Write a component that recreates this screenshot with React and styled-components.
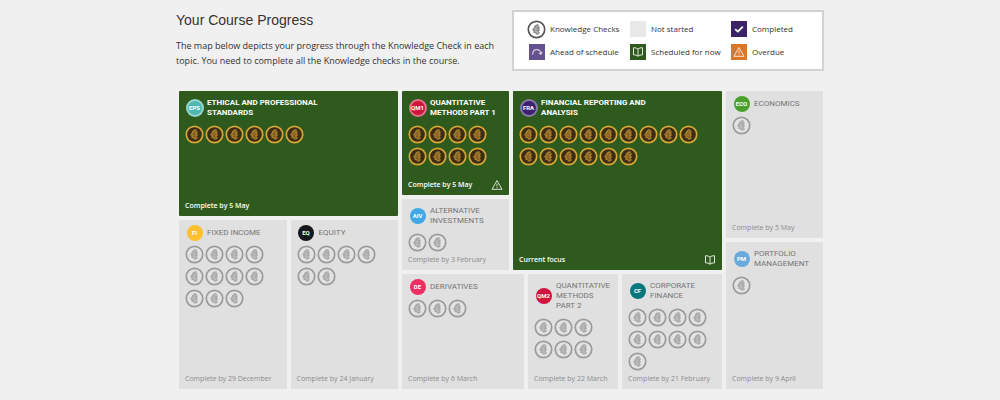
import React from "react";
import styled, { createGlobalStyle } from "styled-components";

const GlobalStyle = createGlobalStyle`
  body {
    margin: 0;
    background: #f0f0f0;
    color: #333;
    font-family: "Open Sans", "Noto Sans", sans-serif;
  }
`;

const Page = styled.main`
  box-sizing: border-box;
  max-width: 648px;
  margin: 0 auto;
  padding: 10px 0 11px;
`;

const Header = styled.header`
  display: flex;
  align-items: flex-start;
  margin-bottom: 20px;
`;

const Intro = styled.div`
  flex: 1;
  padding-right: 16px;

  h1 {
    margin: 0 0 8px;
    font-family: "Liberation Sans", Arial, sans-serif;
    font-size: 14px;
    font-weight: 400;
    line-height: 20px;
  }

  p {
    margin: 0;
    font-size: 9px;
    line-height: 15px;
  }
`;

const Legend = styled.ul`
  box-sizing: border-box;
  flex: 0 0 312px;
  display: grid;
  grid-template-columns: 101px 101px 1fr;
  grid-auto-rows: 22px;
  row-gap: 1px;
  margin: 0;
  padding: 6px 0 6px 13px;
  list-style: none;
  border: 2px solid #d2d2d2;
  background: #fff;
`;

const LegendItem = styled.li`
  display: flex;
  align-items: center;
  gap: 4px;
  font-size: 8px;
  line-height: 12px;
  white-space: nowrap;
`;

const Slot = styled.span`
  flex: none;
  display: flex;
  align-items: center;
  justify-content: center;
  width: 19px;
`;

const Swatch = styled.span`
  display: flex;
  align-items: center;
  justify-content: center;
  width: 16px;
  height: 16px;
  color: #fff;
  background: ${({ $color }) => $color};
`;

const Row = styled.div`
  display: grid;
  grid-template-columns: ${({ $cols }) => $cols};
  gap: 4px;
  min-width: 0;
`;

const Column = styled.div`
  display: grid;
  grid-template-rows: ${({ $rows }) => $rows};
  gap: 4px;
  min-width: 0;
`;

const Map = styled(Row)`
  min-height: 298px;
  margin: 0 1px 0 3px;
`;

const TileRoot = styled.section`
  box-sizing: border-box;
  display: flex;
  flex-direction: column;
  min-width: 0;
  padding: 3px 6px 5px;
  border-radius: 1px;
  color: ${({ $active }) => ($active ? "#fff" : "#757575")};
  background: ${({ $active }) => ($active ? "#2f5a1d" : "#e0e0e0")};
`;

const TileHead = styled.div`
  display: flex;
  align-items: center;
  gap: 3px;
  min-height: 19px;

  h2 {
    max-width: 120px;
    margin: 0;
    padding: 4px 0;
    font-family: Roboto, "Open Sans", sans-serif;
    font-size: 8px;
    font-weight: ${({ $active }) => ($active ? 700 : 400)};
    line-height: 10px;
    text-transform: uppercase;
  }
`;

const Badge = styled.span`
  box-sizing: border-box;
  display: flex;
  align-items: center;
  justify-content: center;
  width: ${({ $active }) => ($active ? 18 : 16)}px;
  height: ${({ $active }) => ($active ? 18 : 16)}px;
  border: ${({ $active }) => ($active ? "2px solid rgba(255, 255, 255, 0.4)" : "0")};
  border-radius: 50%;
  color: #fff;
  background: ${({ $color }) => $color};
  font-family: Roboto, "Open Sans", sans-serif;
  font-size: 6px;
  font-weight: 700;
  line-height: 8px;
`;

const Coins = styled.div`
  display: flex;
  flex-wrap: wrap;
  gap: 3px 1px;
  margin-top: 3px;
`;

const TileFoot = styled.div`
  display: flex;
  align-items: center;
  justify-content: space-between;
  height: 10px;
  margin-top: auto;
  font-size: 7px;
  font-weight: ${({ $active }) => ($active ? 600 : 400)};
  line-height: 10px;
  white-space: nowrap;
  color: ${({ $active }) => ($active ? "#fff" : "#8c8c8c")};
`;

const coinColors = {
  active: { ring: "#d6a733", fill: "#3b2c18", mark: "#a67c2a" },
  muted: { ring: "#9b9b9b", fill: "#e3e3e3", mark: "#a9a9a9" },
  legend: { ring: "#555", fill: "#fff", mark: "#8a8a8a" },
};

const Coin = ({ tone }) => {
  const { ring, fill, mark } = coinColors[tone];
  return (
    <svg width="19" height="19" viewBox="0 0 19 19" aria-hidden="true">
      <circle cx="9.5" cy="9.5" r="8.2" fill={fill} stroke={ring} strokeWidth="1.7" />
      <path
        d="M11.6 4.2 9 4.6 7.2 6.2 6.4 8.2 4.8 10l1.5.6.2 2.4 1.9.2 1 1.6 2.8-.8.6-1.6-1.2-1 1.4-1.4-1-1.4 1-1.6-1.2-1z"
        fill={mark}
      />
      <path
        d="M11.6 6.6c-1.6-.6-2.8.4-2.8 2.2M7.4 9.2h3.4M8 11h2.6M8.8 11c.2 1.4 1.4 2 2.6 1.4"
        fill="none"
        stroke={fill}
        strokeWidth="0.6"
        opacity="0.7"
      />
    </svg>
  );
};

const Icon = ({ width = 1, children }) => (
  <svg
    width="12"
    height="12"
    viewBox="0 0 12 12"
    fill="none"
    stroke="currentColor"
    strokeWidth={width}
    strokeLinejoin="round"
    aria-hidden="true"
  >
    {children}
  </svg>
);

const CheckIcon = () => (
  <Icon width={1.8}>
    <path d="M2.2 6.2 4.8 8.6 9.8 3.6" />
  </Icon>
);

const AheadIcon = () => (
  <Icon width={1.2}>
    <path d="M1.600 8.800c0-3.200 1.800-5.200 4.200-5.200 2.200 0 3.800 1.600 4.200 4.200M7.800 7.200l2.300 1 .9-2.200" opacity="0.7" />
  </Icon>
);

const BookIcon = () => (
  <Icon>
    <path
      d="M6 3.200C5 2 3.200 1.700 1.500 1.700v7.200c1.700 0 3.500.2 4.500 1.400 1-1.200 2.800-1.400 4.500-1.400V1.700C8.800 1.700 7 2 6 3.200zM6 3.200v7.100"
      opacity="0.85"
    />
  </Icon>
);

const WarningIcon = () => (
  <Icon>
    <path d="M6 1.500 11 10.300H1zM6 4.600v2.800M6 8.200v1" opacity="0.8" />
  </Icon>
);

const Tile = ({ code, color, title, checks, due, active, icon }) => (
  <TileRoot $active={active}>
    <TileHead $active={active}>
      <Slot>
        <Badge $color={color} $active={active}>
          {code}
        </Badge>
      </Slot>
      <h2>{title}</h2>
    </TileHead>
    <Coins>
      {Array.from({ length: checks }, (_, i) => (
        <Coin key={i} tone={active ? "active" : "muted"} />
      ))}
    </Coins>
    <TileFoot $active={active}>
      <span>{due}</span>
      {icon}
    </TileFoot>
  </TileRoot>
);

export default () => (
  <>
    <GlobalStyle />
    <Page>
      <Header>
        <Intro>
          <h1>Your Course Progress</h1>
          <p>
            The map below depicts your progress through the Knowledge Check in
            each topic. You need to complete all the Knowledge checks in the
            course.
          </p>
        </Intro>
        <Legend>
          <LegendItem>
            <Slot>
              <Coin tone="legend" />
            </Slot>
            Knowledge Checks
          </LegendItem>
          <LegendItem>
            <Slot>
              <Swatch $color="#e8e8e8" />
            </Slot>
            Not started
          </LegendItem>
          <LegendItem>
            <Slot>
              <Swatch $color="#3a2466">
                <CheckIcon />
              </Swatch>
            </Slot>
            Completed
          </LegendItem>
          <LegendItem>
            <Slot>
              <Swatch $color="#66518f">
                <AheadIcon />
              </Swatch>
            </Slot>
            Ahead of schedule
          </LegendItem>
          <LegendItem>
            <Slot>
              <Swatch $color="#2f5a1d">
                <BookIcon />
              </Swatch>
            </Slot>
            Scheduled for now
          </LegendItem>
          <LegendItem>
            <Slot>
              <Swatch $color="#d9772b">
                <WarningIcon />
              </Swatch>
            </Slot>
            Overdue
          </LegendItem>
        </Legend>
      </Header>

      <Map $cols="219fr 320fr 97fr">
        <Column $rows="125fr 169fr">
          <Tile code="EPS" color="#4fb8b0" title="Ethical and Professional Standards" checks={6} due="Complete by 5 May" active />
          <Row $cols="1fr 1fr">
            <Tile code="FI" color="#fcc030" title="Fixed Income" checks={11} due="Complete by 29 December" />
            <Tile code="EQ" color="#15171a" title="Equity" checks={6} due="Complete by 24 January" />
          </Row>
        </Column>

        <Column $rows="179fr 115fr">
          <Row $cols="107fr 209fr">
            <Column $rows="104fr 71fr">
              <Tile code="QM1" color="#d0143c" title="Quantitative Methods Part 1" checks={8} due="Complete by 5 May" active icon={<WarningIcon />} />
              <Tile code="AIV" color="#3fa9e6" title="Alternative Investments" checks={2} due="Complete by 3 February" />
            </Column>
            <Tile code="FRA" color="#3b2170" title="Financial Reporting and Analysis" checks={15} due="Current focus" active icon={<BookIcon />} />
          </Row>
          <Row $cols="122fr 90fr 100fr">
            <Tile code="DE" color="#ee2f63" title="Derivatives" checks={3} due="Complete by 6 March" />
            <Tile code="QM2" color="#d0143c" title="Quantitative Methods Part 2" checks={6} due="Complete by 22 March" />
            <Tile code="CF" color="#08787c" title="Corporate Finance" checks={9} due="Complete by 21 February" />
          </Row>
        </Column>

        <Column $rows="1fr 1fr">
          <Tile code="ECO" color="#4aa02c" title="Economics" checks={1} due="Complete by 5 May" />
          <Tile code="PM" color="#6aa9dc" title="Portfolio Management" checks={1} due="Complete by 9 April" />
        </Column>
      </Map>
    </Page>
  </>
);
